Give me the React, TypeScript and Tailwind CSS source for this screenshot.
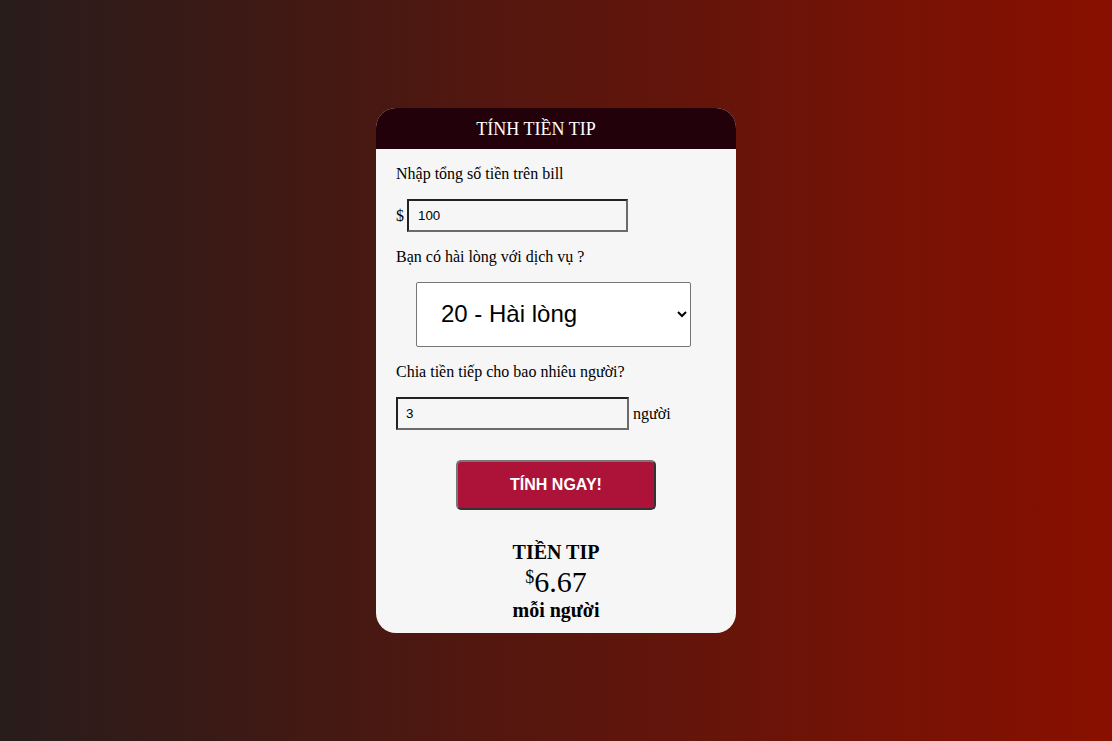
import { useState } from "react";

function App() {
  const [bill, setBill] = useState("100");
  const [service, setService] = useState("0.2");
  const [people, setPeople] = useState("3");
  const [tip, setTip] = useState("6.67");

  const calc = () => {
    const total = (parseFloat(bill) * parseFloat(service)) / (parseInt(people) || 1);
    setTip(isNaN(total) ? "0.00" : total.toFixed(2));
  };

  return (
    <div className="min-h-screen flex items-center justify-center bg-[linear-gradient(to_right,#281c1b,#891000)] font-['Liberation_Serif',serif]">
      <div className="w-[360px] h-[525px] rounded-[20px] overflow-hidden bg-[#f6f6f6] flex flex-col">
        <div className="h-[41px] bg-[#22010b] flex items-center justify-center pr-10">
          <h1 className="text-white text-[18px] leading-none">TÍNH TIỀN TIP</h1>
        </div>
        <div className="px-5 pt-[16px] text-black text-[16px]">
          <p className="leading-[18px]">Nhập tổng số tiền trên bill</p>
          <div className="flex items-center mt-[16px]">
            <span className="mr-[3px]">$</span>
            <input
              className="w-[221px] h-[33px] border-2 border-t-[#222] border-l-[#222] border-b-[#6b6b6b] border-r-[#6b6b6b] bg-[#f6f6f6] px-[9px] text-[13.33px] font-['Liberation_Sans',sans-serif] outline-none"
              value={bill}
              onChange={(e) => setBill(e.target.value)}
            />
          </div>
          <p className="leading-[18px] mt-[16px]">Bạn có hài lòng với dịch vụ ?</p>
          <div className="mt-[16px] pl-5">
            <select
              className="w-[275px] h-[65px] bg-white border border-[#767676] rounded-[2px] pl-[20px] pr-1 pb-[3px] text-[24px] font-['Liberation_Sans',sans-serif]"
              value={service}
              onChange={(e) => setService(e.target.value)}
            >
              <option value="0.3">30 - Tuyệt vời</option>
              <option value="0.2">20 - Hài lòng</option>
              <option value="0.15">15 - Bình thường</option>
              <option value="0.1">10 - Tệ</option>
            </select>
          </div>
          <p className="leading-[18px] mt-[16px]">Chia tiền tiếp cho bao nhiêu người?</p>
          <div className="flex items-center mt-[16px]">
            <input
              className="w-[233px] h-[33px] border-2 border-t-[#222] border-l-[#222] border-b-[#6b6b6b] border-r-[#6b6b6b] bg-[#f6f6f6] px-[8px] text-[13.33px] font-['Liberation_Sans',sans-serif] outline-none"
              value={people}
              onChange={(e) => setPeople(e.target.value)}
            />
            <span className="ml-1">người</span>
          </div>
          <div className="flex justify-center mt-[30px]">
            <button
              onClick={calc}
              className="w-[200px] h-[50px] bg-[#ad1338] text-white font-bold text-[16px] font-['Liberation_Sans',sans-serif] rounded-[5px] border-2 border-t-[#777] border-l-[#777] border-b-[#333] border-r-[#333]"
            >
              TÍNH NGAY!
            </button>
          </div>
          <div className="text-center mt-[30px]">
            <div className="font-bold text-[20px] leading-[25px]">TIỀN TIP</div>
            <div className="text-[30px] leading-[34px]">
              <sup className="text-[18px]">$</sup>
              {tip}
            </div>
            <div className="font-bold text-[20px] leading-[23px]">mỗi người</div>
          </div>
        </div>
      </div>
    </div>
  );
}

export default App;
